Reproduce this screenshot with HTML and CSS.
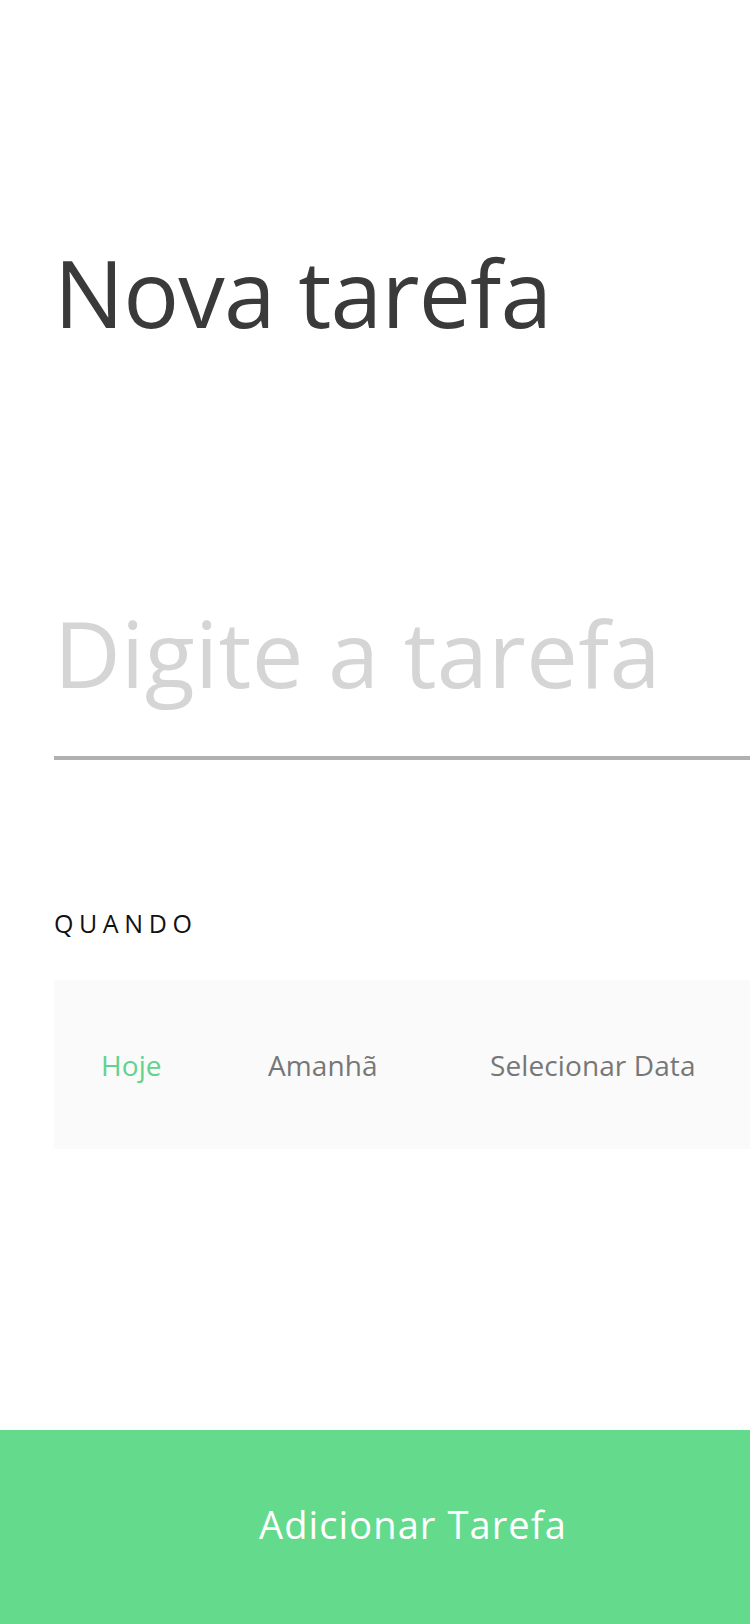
FILE: index.html
```html
<!DOCTYPE html>
<html lang="pt">
<head>
<meta charset="utf-8">
<title>Nova tarefa</title>
<link rel="stylesheet" href="styles.css">
</head>
<body>
<div class="page">
  <main class="content">
    <h1 class="title">Nova tarefa</h1>
    <div class="field">
      <input class="task-input" type="text" placeholder="Digite a tarefa">
    </div>
    <div class="section-label">QUANDO</div>
    <div class="when-options">
      <span class="option option-active">Hoje</span>
      <span class="option">Amanhã</span>
      <span class="option">Selecionar Data</span>
    </div>
  </main>
  <button class="add-button" type="button">Adicionar Tarefa</button>
</div>
</body>
</html>
```

FILE: styles.css
```css
html, body {
  margin: 0;
  padding: 0;
  background: #ffffff;
  overflow: hidden;
}

.page {
  width: 750px;
  height: 1624px;
  display: flex;
  flex-direction: column;
  font-family: "Open Sans", "Noto Sans", sans-serif;
}

.content {
  padding: 246px 0 0 54px;
  display: flex;
  flex-direction: column;
}

.title {
  margin: 0;
  font-size: 93px;
  line-height: 93px;
  font-weight: 400;
  color: #3a3a3a;
  letter-spacing: -0.8px;
}

.field {
  margin-top: 254px;
  border-bottom: 4px solid #b0b0b0;
  padding-bottom: 43px;
}

.task-input {
  display: block;
  width: 100%;
  height: 120px;
  border: none;
  outline: none;
  padding: 0;
  margin: 0;
  background: transparent;
  font-family: "Open Sans", "Noto Sans", sans-serif;
  font-size: 92px;
  line-height: 120px;
  font-weight: 400;
  color: #3a3a3a;
  letter-spacing: 0.35px;
}

.task-input::placeholder {
  color: #d5d5d5;
  opacity: 1;
}

.section-label {
  margin-top: 151px;
  font-size: 25px;
  line-height: 25px;
  letter-spacing: 5.6px;
  color: #111111;
  font-weight: 400;
}

.when-options {
  margin-top: 44px;
  height: 169px;
  background: #fafafa;
  display: grid;
  grid-template-columns: 167px 222px auto;
  align-items: center;
  padding-left: 47px;
}

.option {
  font-size: 28px;
  line-height: 28px;
  font-weight: 400;
  color: #777777;
  letter-spacing: 0.1px;
}

.option-active {
  color: #62d38c;
}

.add-button {
  margin-top: auto;
  height: 194px;
  width: 100%;
  border: none;
  background: #64db8c;
  color: #ffffff;
  font-family: "Open Sans", "Noto Sans", sans-serif;
  font-size: 38px;
  font-weight: 400;
  letter-spacing: 1.1px;
  padding: 0 0 6px 76px;
  display: flex;
  align-items: center;
  justify-content: center;
}
```
